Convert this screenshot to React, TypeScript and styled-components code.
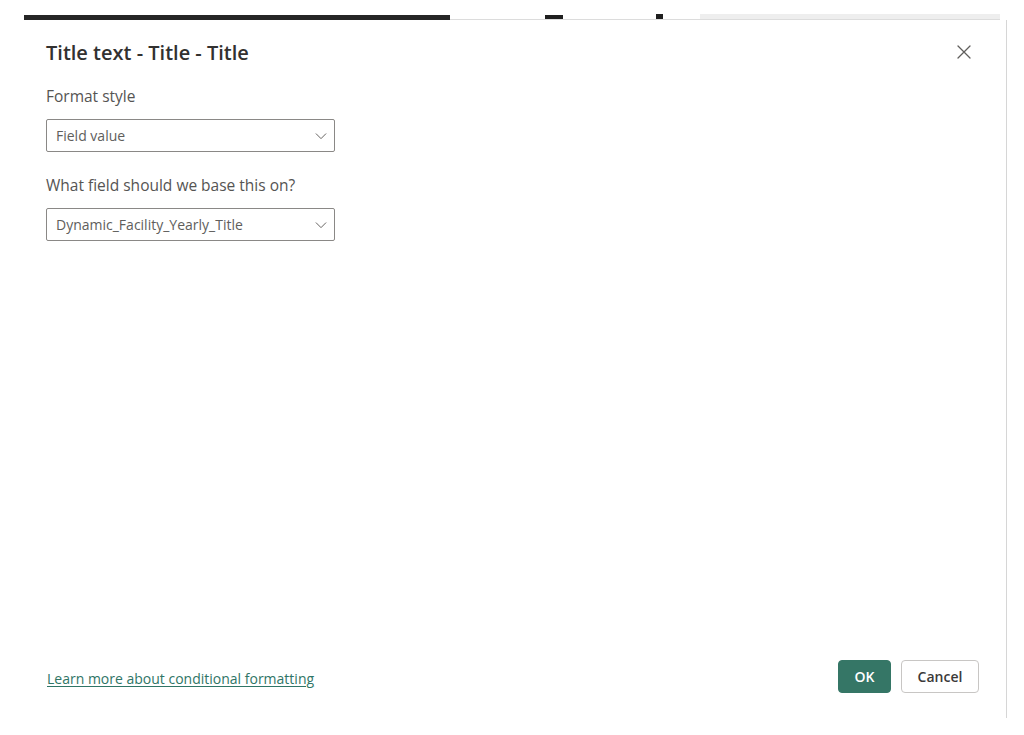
import React from "react";
import styled, { createGlobalStyle } from "styled-components";

const Global = createGlobalStyle`
  html, body { margin: 0; padding: 0; background: #ffffff; }
  body { font-family: "Segoe UI", "Open Sans", "Noto Sans", sans-serif; }
  * { box-sizing: border-box; }
`;

const Page = styled.div`
  width: 1024px;
  height: 735px;
  overflow: hidden;
  background: #ffffff;
  display: flex;
  flex-direction: column;
  padding-top: 15px;
`;

const AppStrip = styled.div`
  height: 5px;
  display: flex;
  align-items: stretch;
  margin-left: 24px;
  width: 976px;
`;

const DarkBar = styled.div`
  width: 427px;
  background: #262626;
`;

const StripRest = styled.div`
  flex: 1;
  display: flex;
  align-items: flex-end;
  border-bottom: 1px solid #dcdcdc;
`;

const Chip = styled.div<{ $w: number; $ml: number; $c: string; $h?: number }>`
  width: ${(p) => p.$w}px;
  height: ${(p) => p.$h ?? 5}px;
  margin-left: ${(p) => p.$ml}px;
  background: ${(p) => p.$c};
`;

const Dialog = styled.div`
  margin-left: 24px;
  width: 983px;
  height: 698px;
  background: #ffffff;
  border-right: 1px solid #d6d6d6;
  display: flex;
  flex-direction: column;
  padding: 15px 27px 25px 22px;
  color: #252423;
`;

const Header = styled.div`
  display: flex;
  align-items: center;
  justify-content: space-between;
  height: 34px;
`;

const Title = styled.h1`
  margin: 0;
  font-size: 20px;
  font-weight: 600;
  color: #323130;
`;

const CloseButton = styled.button`
  border: none;
  background: transparent;
  padding: 0;
  width: 24px;
  height: 24px;
  display: flex;
  align-items: center;
  justify-content: center;
  margin-right: 3px;
`;

const Body = styled.div`
  flex: 1;
  display: flex;
  flex-direction: column;
  padding-top: 16px;
`;

const Field = styled.div`
  display: flex;
  flex-direction: column;
  margin-bottom: 22px;
`;

const Label = styled.label`
  font-size: 15.5px;
  color: #555453;
  line-height: 22px;
  margin-bottom: 12px;
`;

const Select = styled.div`
  width: 289px;
  height: 33px;
  border: 1px solid #8a8886;
  border-radius: 2px;
  display: flex;
  align-items: center;
  justify-content: space-between;
  padding: 0 6px 0 9px;
  font-size: 14px;
  color: #605e5c;
`;

const Footer = styled.div`
  display: flex;
  align-items: center;
  justify-content: space-between;
`;

const Link = styled.a`
  font-size: 14px;
  color: #2f7566;
  text-decoration: underline;
  text-underline-offset: 2px;
  margin-left: 1px;
  margin-top: 4px;
`;

const Buttons = styled.div`
  display: flex;
  gap: 10px;
`;

const Button = styled.button<{ $primary?: boolean }>`
  height: 33px;
  width: ${(p) => (p.$primary ? "53px" : "78px")};
  padding: 0;
  border-radius: 4px;
  font-family: inherit;
  font-size: 14px;
  font-weight: 600;
  border: 1px solid ${(p) => (p.$primary ? "#357666" : "#c8c6c4")};
  background: ${(p) => (p.$primary ? "#357666" : "#ffffff")};
  color: ${(p) => (p.$primary ? "#ffffff" : "#3b3a39")};
`;

const Chevron = () => (
  <svg width="14" height="14" viewBox="0 0 16 16" fill="none">
    <path d="M2.5 5.5 L8 11 L13.5 5.5" stroke="#605e5c" strokeWidth="1.1" strokeLinecap="round" strokeLinejoin="round" />
  </svg>
);

const CloseIcon = () => (
  <svg width="14" height="14" viewBox="0 0 14 14" fill="none">
    <path d="M1 1 L13 13 M13 1 L1 13" stroke="#605e5c" strokeWidth="1.3" strokeLinecap="round" />
  </svg>
);

export default function App() {
  return (
    <>
      <Global />
      <Page>
        <AppStrip>
          <DarkBar />
          <StripRest>
            <Chip $w={18} $ml={95} $c="#1f1f1f" $h={4} />
            <Chip $w={7} $ml={93} $c="#1f1f1f" $h={5} />
            <Chip $w={300} $ml={37} $c="#eeeeee" $h={5} />
          </StripRest>
        </AppStrip>
        <Dialog>
          <Header>
            <Title>Title text - Title - Title</Title>
            <CloseButton aria-label="Close">
              <CloseIcon />
            </CloseButton>
          </Header>
          <Body>
            <Field>
              <Label>Format style</Label>
              <Select>
                <span>Field value</span>
                <Chevron />
              </Select>
            </Field>
            <Field>
              <Label>What field should we base this on?</Label>
              <Select>
                <span>Dynamic_Facility_Yearly_Title</span>
                <Chevron />
              </Select>
            </Field>
          </Body>
          <Footer>
            <Link href="#">Learn more about conditional formatting</Link>
            <Buttons>
              <Button $primary>OK</Button>
              <Button>Cancel</Button>
            </Buttons>
          </Footer>
        </Dialog>
      </Page>
    </>
  );
}
